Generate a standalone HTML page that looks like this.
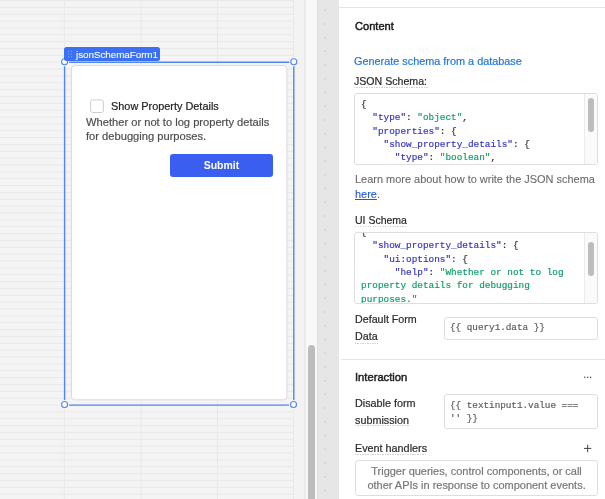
<!DOCTYPE html>
<html><head><meta charset="utf-8">
<style>
*{margin:0;padding:0;box-sizing:border-box}
html,body{width:605px;height:499px;overflow:hidden;background:#f4f4f4;font-family:"Liberation Sans",sans-serif;}
.abs{position:absolute}
.t{position:absolute;white-space:nowrap;line-height:1;will-change:transform;-webkit-text-stroke:0.2px currentColor}
.bd{font-weight:normal;-webkit-text-stroke:0.45px currentColor}
pre{will-change:transform}
.mono{font-family:"Liberation Mono",monospace;-webkit-text-stroke:0.18px currentColor}
.k{color:#3333c6}
.s{color:#0c9f65}
.dot{position:absolute;height:1px;background:repeating-linear-gradient(90deg,#cfcfcf 0,#cfcfcf 1.3px,transparent 1.3px,transparent 2.5px)}
.box{position:absolute;border:1px solid #dedede;border-radius:3px;background:#fff}
</style></head><body>
<svg class="abs" style="left:0;top:0" width="294" height="499" fill="#e8e8e8"><rect x="0" y="0.00" width="294" height="1"/>
<rect x="0" y="6.86" width="294" height="1"/>
<rect x="0" y="13.71" width="294" height="1"/>
<rect x="0" y="20.57" width="294" height="1"/>
<rect x="0" y="27.42" width="294" height="1"/>
<rect x="0" y="34.28" width="294" height="1"/>
<rect x="0" y="41.14" width="294" height="1"/>
<rect x="0" y="47.99" width="294" height="1"/>
<rect x="0" y="54.85" width="294" height="1"/>
<rect x="0" y="61.70" width="294" height="1"/>
<rect x="0" y="68.56" width="294" height="1"/>
<rect x="0" y="75.42" width="294" height="1"/>
<rect x="0" y="82.27" width="294" height="1"/>
<rect x="0" y="89.13" width="294" height="1"/>
<rect x="0" y="95.98" width="294" height="1"/>
<rect x="0" y="102.84" width="294" height="1"/>
<rect x="0" y="109.70" width="294" height="1"/>
<rect x="0" y="116.55" width="294" height="1"/>
<rect x="0" y="123.41" width="294" height="1"/>
<rect x="0" y="130.26" width="294" height="1"/>
<rect x="0" y="137.12" width="294" height="1"/>
<rect x="0" y="143.98" width="294" height="1"/>
<rect x="0" y="150.83" width="294" height="1"/>
<rect x="0" y="157.69" width="294" height="1"/>
<rect x="0" y="164.54" width="294" height="1"/>
<rect x="0" y="171.40" width="294" height="1"/>
<rect x="0" y="178.26" width="294" height="1"/>
<rect x="0" y="185.11" width="294" height="1"/>
<rect x="0" y="191.97" width="294" height="1"/>
<rect x="0" y="198.82" width="294" height="1"/>
<rect x="0" y="205.68" width="294" height="1"/>
<rect x="0" y="212.54" width="294" height="1"/>
<rect x="0" y="219.39" width="294" height="1"/>
<rect x="0" y="226.25" width="294" height="1"/>
<rect x="0" y="233.10" width="294" height="1"/>
<rect x="0" y="239.96" width="294" height="1"/>
<rect x="0" y="246.82" width="294" height="1"/>
<rect x="0" y="253.67" width="294" height="1"/>
<rect x="0" y="260.53" width="294" height="1"/>
<rect x="0" y="267.38" width="294" height="1"/>
<rect x="0" y="274.24" width="294" height="1"/>
<rect x="0" y="281.10" width="294" height="1"/>
<rect x="0" y="287.95" width="294" height="1"/>
<rect x="0" y="294.81" width="294" height="1"/>
<rect x="0" y="301.66" width="294" height="1"/>
<rect x="0" y="308.52" width="294" height="1"/>
<rect x="0" y="315.38" width="294" height="1"/>
<rect x="0" y="322.23" width="294" height="1"/>
<rect x="0" y="329.09" width="294" height="1"/>
<rect x="0" y="335.94" width="294" height="1"/>
<rect x="0" y="342.80" width="294" height="1"/>
<rect x="0" y="349.66" width="294" height="1"/>
<rect x="0" y="356.51" width="294" height="1"/>
<rect x="0" y="363.37" width="294" height="1"/>
<rect x="0" y="370.22" width="294" height="1"/>
<rect x="0" y="377.08" width="294" height="1"/>
<rect x="0" y="383.94" width="294" height="1"/>
<rect x="0" y="390.79" width="294" height="1"/>
<rect x="0" y="397.65" width="294" height="1"/>
<rect x="0" y="404.50" width="294" height="1"/>
<rect x="0" y="411.36" width="294" height="1"/>
<rect x="0" y="418.22" width="294" height="1"/>
<rect x="0" y="425.07" width="294" height="1"/>
<rect x="0" y="431.93" width="294" height="1"/>
<rect x="0" y="438.78" width="294" height="1"/>
<rect x="0" y="445.64" width="294" height="1"/>
<rect x="0" y="452.50" width="294" height="1"/>
<rect x="0" y="459.35" width="294" height="1"/>
<rect x="0" y="466.21" width="294" height="1"/>
<rect x="0" y="473.06" width="294" height="1"/>
<rect x="0" y="479.92" width="294" height="1"/>
<rect x="0" y="486.78" width="294" height="1"/>
<rect x="0" y="493.63" width="294" height="1"/>
<rect x="63.80" y="0" width="1" height="499"/>
<rect x="140.70" y="0" width="1" height="499"/>
<rect x="216.90" y="0" width="1" height="499"/>
<rect x="293.10" y="0" width="1" height="499"/></svg>
<div class="abs" style="left:294px;top:0;width:10px;height:499px;background:#f3f3f3"></div>
<div class="abs" style="left:304px;top:0;width:2px;height:499px;background:#eaeaea"></div>
<div class="abs" style="left:306px;top:0;width:11.5px;height:499px;background:#f8f8f8"></div>
<div class="abs" style="left:308px;top:345px;width:7px;height:160px;background:#bcbcbc;border-radius:3.5px"></div>
<div class="abs" style="left:317.3px;top:0;width:1px;height:499px;background:#dedede"></div>
<div class="abs" style="left:318.3px;top:0;width:20.7px;height:499px;background:#e6e6e6"></div>
<svg class="abs" style="left:0;top:0" width="605" height="499" fill="#c4c4c4"><circle cx="325" cy="10.20" r="0.75"/>
<circle cx="325" cy="23.92" r="0.75"/>
<circle cx="325" cy="37.64" r="0.75"/>
<circle cx="325" cy="51.36" r="0.75"/>
<circle cx="325" cy="65.08" r="0.75"/>
<circle cx="325" cy="78.80" r="0.75"/>
<circle cx="325" cy="92.52" r="0.75"/>
<circle cx="325" cy="106.24" r="0.75"/>
<circle cx="325" cy="119.96" r="0.75"/>
<circle cx="325" cy="133.68" r="0.75"/>
<circle cx="325" cy="147.40" r="0.75"/>
<circle cx="325" cy="161.12" r="0.75"/>
<circle cx="325" cy="174.84" r="0.75"/>
<circle cx="325" cy="188.56" r="0.75"/>
<circle cx="325" cy="202.28" r="0.75"/>
<circle cx="325" cy="216.00" r="0.75"/>
<circle cx="325" cy="229.72" r="0.75"/>
<circle cx="325" cy="243.44" r="0.75"/>
<circle cx="325" cy="257.16" r="0.75"/>
<circle cx="325" cy="270.88" r="0.75"/>
<circle cx="325" cy="284.60" r="0.75"/>
<circle cx="325" cy="298.32" r="0.75"/>
<circle cx="325" cy="312.04" r="0.75"/>
<circle cx="325" cy="325.76" r="0.75"/>
<circle cx="325" cy="339.48" r="0.75"/>
<circle cx="325" cy="353.20" r="0.75"/>
<circle cx="325" cy="366.92" r="0.75"/>
<circle cx="325" cy="380.64" r="0.75"/>
<circle cx="325" cy="394.36" r="0.75"/>
<circle cx="325" cy="408.08" r="0.75"/>
<circle cx="325" cy="421.80" r="0.75"/>
<circle cx="325" cy="435.52" r="0.75"/>
<circle cx="325" cy="449.24" r="0.75"/>
<circle cx="325" cy="462.96" r="0.75"/>
<circle cx="325" cy="476.68" r="0.75"/>
<circle cx="325" cy="490.40" r="0.75"/></svg>

<!-- form card -->
<svg class="abs" style="left:0;top:0" width="300" height="420">
<rect x="71.4" y="65.6" width="215.5" height="334.2" rx="3.5" fill="#fff" stroke="#dadada" stroke-width="1"/>
</svg>
<svg class="abs" style="left:0;top:0" width="120" height="120"><rect x="90.6" y="99.9" width="12.8" height="12.6" rx="2" fill="#fff" stroke="#cdcdcd" stroke-width="1"/></svg>
<div class="t" style="left:110.9px;top:101px;font-size:10.9px;color:#222">Show Property Details</div>
<div class="t" style="left:86.3px;top:116.8px;font-size:11.15px;color:#4e4e4e">Whether or not to log property details</div>
<div class="t" style="left:86.3px;top:130.7px;font-size:11.15px;color:#4e4e4e">for debugging purposes.</div>
<div class="abs" style="left:170px;top:153.6px;width:103px;height:23.7px;background:#3a5ef0;border-radius:3px"></div>
<div class="t" style="left:170px;top:160px;width:103px;text-align:center;font-size:10.5px;font-weight:bold;color:#fff;-webkit-text-stroke:0">Submit</div>

<!-- selection -->
<svg class="abs" style="left:0;top:0" width="300" height="420">
<g stroke="#5286f2" stroke-width="1.4" fill="none">
<line x1="64.6" y1="62.3" x2="293.8" y2="62.3"/><line x1="64.6" y1="405.1" x2="293.8" y2="405.1"/>
<line x1="64.6" y1="62.3" x2="64.6" y2="405.1"/><line x1="293.8" y1="62.3" x2="293.8" y2="405.1"/>
</g>
<g fill="#f4f4f4">
<circle cx="64.6" cy="61.8" r="4.6"/><circle cx="293.8" cy="61.8" r="4.6"/><circle cx="64.6" cy="404.5" r="4.6"/><circle cx="293.5" cy="404.5" r="4.6"/>
</g>
<g fill="#fff" stroke="#5286f2" stroke-width="1.1">
<circle cx="64.6" cy="61.8" r="3"/><circle cx="293.8" cy="61.8" r="3"/><circle cx="64.6" cy="404.5" r="3"/><circle cx="293.5" cy="404.5" r="3"/>
</g>
</svg>
<div class="abs" style="left:64.3px;top:47px;width:95.3px;height:13.6px;background:#3b6ff5;border-radius:2.5px"></div>
<svg class="abs" style="left:0;top:0" width="100" height="70">
<g fill="#8db0fb"><circle cx="68.6" cy="51.3" r="0.6"/><circle cx="71.6" cy="51.3" r="0.6"/><circle cx="68.6" cy="54" r="0.6"/><circle cx="71.6" cy="54" r="0.6"/><circle cx="68.6" cy="56.8" r="0.6"/><circle cx="71.6" cy="56.8" r="0.6"/></g>
</svg>
<div class="t" style="left:75.9px;top:49.6px;font-size:9.9px;letter-spacing:-0.06px;color:#fff;-webkit-text-stroke:0.1px #fff">jsonSchemaForm1</div>

<!-- right panel -->
<div class="abs" style="left:339px;top:0;width:266px;height:499px;background:#fff"></div>
<div class="abs" style="left:339px;top:7px;width:266px;height:1px;background:#e4e4e4"></div>
<div class="t bd" style="left:354.8px;top:20.8px;font-size:11.1px;color:#1a1a1a">Content</div>

<div class="t" style="left:354.4px;top:55.9px;font-size:10.87px;color:#2478d8">Generate schema from a database</div>
<div class="t" style="left:354.4px;top:76px;font-size:10.6px;color:#2a2a2a">JSON Schema:</div>
<div class="dot" style="left:354.4px;top:87px;width:73.4px"></div>

<div class="box" style="left:354.3px;top:93.2px;width:243.5px;height:72.2px;overflow:hidden">
 <div class="abs" style="left:229px;top:0;width:13.5px;height:71px;background:#fafafa;border-left:1px solid #ebebeb"></div>
 <div class="abs" style="left:232.3px;top:3.5px;width:6.4px;height:34px;background:#bdbdbd;border-radius:3.2px"></div>
 <pre class="abs mono" style="left:5.5px;top:3.8px;font-size:9.4px;line-height:13.35px;color:#333">{
  <span class="k">"type"</span>: <span class="s">"object"</span>,
  <span class="k">"properties"</span>: {
    <span class="k">"show_property_details"</span>: {
      <span class="k">"type"</span>: <span class="s">"boolean"</span>,</pre>
</div>

<div class="t" style="left:354.5px;top:171.8px;font-size:10.96px;color:#6a6a6a;line-height:14.9px;-webkit-text-stroke:0.1px currentColor">Learn more about how to write the JSON schema<br><span style="color:#1f55e6;text-decoration:underline">here</span>.</div>
<div class="t" style="left:354.5px;top:215px;font-size:10.5px;color:#2a2a2a">UI Schema</div>
<div class="dot" style="left:354.5px;top:226.2px;width:52.5px"></div>

<div class="box" style="left:354.3px;top:232.1px;width:243.5px;height:71.7px;overflow:hidden">
 <div class="abs" style="left:229px;top:0;width:13.5px;height:71px;background:#fafafa;border-left:1px solid #ebebeb"></div>
 <div class="abs" style="left:232.3px;top:9px;width:6.4px;height:33.6px;background:#bdbdbd;border-radius:3.2px"></div>
 <pre class="abs mono" style="left:5.5px;top:-7.2px;font-size:9.4px;line-height:13.35px;color:#333">{
  <span class="k">"show_property_details"</span>: {
    <span class="k">"ui:options"</span>: {
      <span class="k">"help"</span>: <span class="s">"Whether or not to log
property details for debugging
purposes."</span></pre>
</div>

<div class="t" style="left:354.6px;top:311px;font-size:10.7px;color:#2a2a2a;line-height:17.2px">Default Form<br>Data</div>
<div class="dot" style="left:354.6px;top:342.8px;width:23px"></div>
<div class="box" style="left:444.3px;top:317.3px;width:153.3px;height:22.8px"></div>
<div class="t mono" style="left:450.4px;top:322.5px;font-size:9.3px;color:#5c5c5c">{{ query1.data }}</div>

<div class="abs" style="left:340.8px;top:358.8px;width:265px;height:1px;background:#e6e6e6"></div>
<div class="t bd" style="left:354.6px;top:371.6px;font-size:11.2px;color:#222">Interaction</div>
<svg class="abs" style="left:580px;top:372px" width="16" height="10" fill="#444"><circle cx="4.8" cy="5.2" r="0.75"/><circle cx="7.7" cy="5.2" r="0.75"/><circle cx="10.6" cy="5.2" r="0.75"/></svg>

<div class="t" style="left:354.6px;top:394.5px;font-size:10.8px;color:#2a2a2a;line-height:16.8px">Disable form<br>submission</div>
<div class="dot" style="left:354.6px;top:425.4px;width:54.2px"></div>
<div class="box" style="left:444.3px;top:394px;width:153.3px;height:35px"></div>
<div class="t mono" style="left:450.4px;top:400px;font-size:9.3px;color:#5c5c5c;line-height:12.7px">{{ textinput1.value ===<br>'' }}</div>

<div class="t" style="left:354.6px;top:442.9px;font-size:10.8px;color:#2a2a2a">Event handlers</div>
<div class="dot" style="left:354.6px;top:454.4px;width:72px"></div>
<svg class="abs" style="left:580px;top:440px" width="16" height="16" stroke="#3a3a3a" stroke-width="0.95"><line x1="4" y1="8.4" x2="11.3" y2="8.4"/><line x1="7.65" y1="4.7" x2="7.65" y2="12.1"/></svg>
<div class="box" style="left:354.5px;top:460.3px;width:243.1px;height:35.3px"></div>
<div class="t" style="left:354.5px;top:465px;width:243.1px;text-align:center;font-size:10.97px;color:#777;line-height:13.8px">Trigger queries, control components, or call<br>other APIs in response to component events.</div>
</body></html>
